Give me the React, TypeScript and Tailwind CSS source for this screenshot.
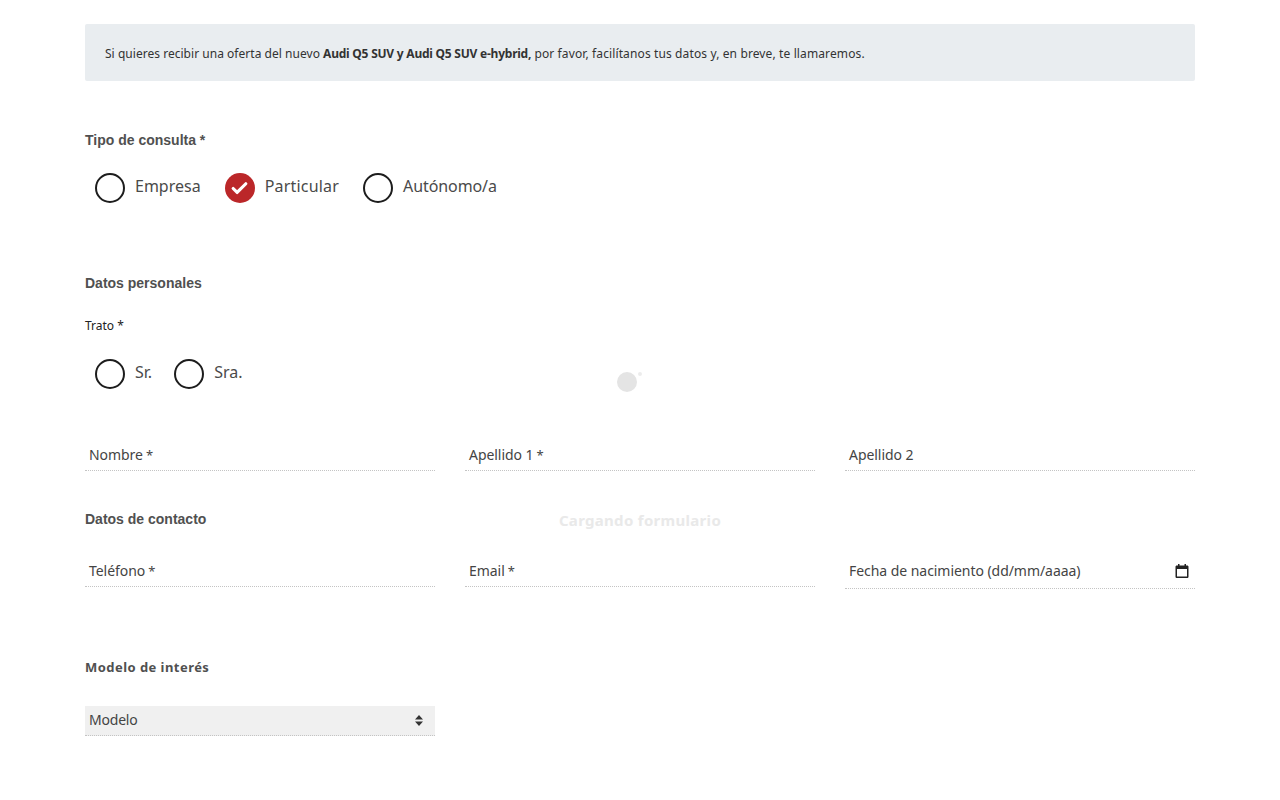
import { Check } from 'lucide-react';

const bodyFont = "font-['Noto_Sans',sans-serif]";
const headFont = "font-['Liberation_Sans',Arial,sans-serif]";

function Radio({ label, checked, labelClass = '' }: { label: string; checked?: boolean; labelClass?: string }) {
  return (
    <label className="flex items-center gap-[10px]">
      {checked ? (
        <span className="flex h-[30px] w-[30px] items-center justify-center rounded-full bg-[#bb2729]">
          <Check size={19} strokeWidth={4} className="mt-px text-white" />
        </span>
      ) : (
        <span className="h-[30px] w-[30px] rounded-full border-2 border-[#1d1d1d]" />
      )}
      <span className={`relative -top-[2px] text-base leading-6 text-[#4a4a4a] ${labelClass}`}>{label}</span>
    </label>
  );
}

function Field({ label, required, icon }: { label: string; required?: boolean; icon?: boolean }) {
  return (
    <div className={`flex items-start justify-between border-b border-dotted border-[#c4c4c4] pt-[6px] pl-1 pr-[6px] ${icon ? 'h-[34px]' : 'h-[32px]'}`}>
      <span className="text-sm leading-5 tracking-[-0.05px] text-[#444]">
        {label}
        {required && <span className="ml-[3px] text-[13px]">*</span>}
      </span>
      {icon && (
        <svg width="14" height="14" viewBox="0 0 14 14" className="mt-[3px] text-[#222]">
          <path
            fill="currentColor"
            d="M3 0h1.5v1.5h5V0H11v1.5h1.2c.7 0 1.3.6 1.3 1.3v9.9c0 .7-.6 1.3-1.3 1.3H1.8c-.7 0-1.3-.6-1.3-1.3V2.8c0-.7.6-1.3 1.3-1.3H3V0zM2 5v7.5h10V5H2z"
          />
        </svg>
      )}
    </div>
  );
}

export default function App() {
  return (
    <main className={`relative min-h-[800px] bg-white ${bodyFont}`}>
      <div className="mx-auto w-[1110px] pt-6">
        {/* Intro banner */}
        <div className="flex h-[57px] items-center rounded-[2px] bg-[#e9edf0] px-5 pt-[2px] text-xs text-[#333]">
          <p>
            <span className="tracking-[0.03px]">Si quieres recibir una oferta del nuevo </span>
            <b className="font-bold tracking-[-0.23px]">Audi Q5 SUV y Audi Q5 SUV e-hybrid,</b>
            <span className="tracking-[0.12px]"> por favor, facilítanos tus datos y, en breve, te llamaremos.</span>
          </p>
        </div>

        {/* Tipo de consulta */}
        <h3 className={`mt-[50px] text-sm leading-[18px] font-bold text-[#505050] ${headFont}`}>Tipo de consulta *</h3>
        <div className="mt-[24px] flex gap-[24px] pl-[10px]">
          <Radio label="Empresa" />
          <Radio label="Particular" checked labelClass="tracking-[0.2px]" />
          <Radio label="Autónomo/a" labelClass="tracking-[-0.1px]" />
        </div>

        {/* Datos personales */}
        <h3 className={`mt-[71px] text-sm leading-[18px] font-bold text-[#505050] ${headFont}`}>Datos personales</h3>
        <p className="mt-[26px] text-xs leading-4 text-[#222]">Trato *</p>
        <div className="mt-[25px] flex gap-[22px] pl-[10px]">
          <Radio label="Sr." />
          <Radio label="Sra." />
        </div>
        <div className="mt-[50px] grid grid-cols-3 gap-[30px]">
          <Field label="Nombre" required />
          <Field label="Apellido 1" required />
          <Field label="Apellido 2" />
        </div>

        {/* Datos de contacto */}
        <h3 className={`mt-[39px] text-sm leading-[18px] font-bold text-[#505050] ${headFont}`}>Datos de contacto</h3>
        <div className="mt-[27px] grid grid-cols-3 items-start gap-[30px]">
          <Field label="Teléfono" required />
          <Field label="Email" required />
          <Field label="Fecha de nacimiento (dd/mm/aaaa)" icon />
        </div>

        {/* Modelo de interés */}
        <h3 className="mt-[69px] text-[13px] leading-[18px] font-bold tracking-[0.45px] text-[#505050]">Modelo de interés</h3>
        <div className="mt-[30px] w-[350px]">
          <div className="flex h-[30px] items-center justify-between border-b border-dotted border-[#c4c4c4] bg-[#f0f0f0] pb-[2px] pl-1 pr-[12px]">
            <span className="text-sm tracking-[-0.2px] text-[#444]">Modelo</span>
            <svg width="8" height="11" viewBox="0 0 8 11" className="mt-[2px] text-[#333]">
              <path fill="currentColor" d="M4 0l4 4.4H0zM4 11L0 6.6h8z" />
            </svg>
          </div>
        </div>
      </div>

      {/* Loading overlay */}
      <div className="absolute left-[617px] top-[372px] h-5 w-5 rounded-full bg-[#e4e4e4]" />
      <div className="absolute left-[638px] top-[372px] h-[4px] w-[4px] rounded-full bg-[#ececec]" />
      <p className="absolute inset-x-0 top-[509px] text-center text-[15px] font-bold tracking-[0.3px] text-[#e9e9e9]">Cargando formulario</p>
    </main>
  );
}
